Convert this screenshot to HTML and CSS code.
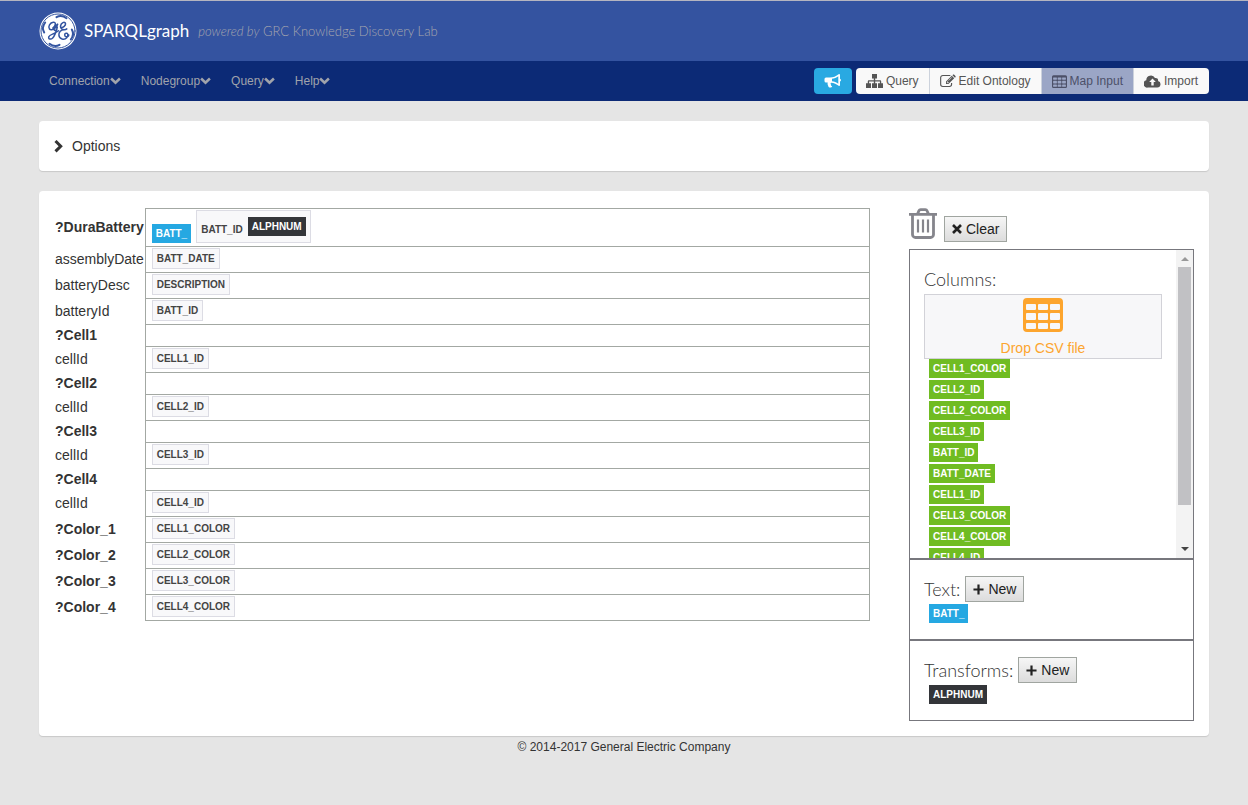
FILE: index.html
```html
<!DOCTYPE html>
<html lang="en">
<head>
<meta charset="utf-8">
<title>SPARQLgraph</title>
<link rel="stylesheet" href="styles.css">
</head>
<body>
<svg class="sprite" aria-hidden="true">
  <symbol id="chev-down" viewBox="0 0 12 8"><path d="M1.200 1.300 6 5.800l4.800-4.500" fill="none" stroke="currentColor" stroke-width="2.800"/></symbol>
  <symbol id="grid" viewBox="0 0 40 34"><path fill="currentColor" fill-rule="evenodd" d="M4 0h32a4 4 0 0 1 4 4v26a4 4 0 0 1-4 4H4a4 4 0 0 1-4-4V4a4 4 0 0 1 4-4zM4 6h8a1 1 0 0 1 1 1v4a1 1 0 0 1-1 1H4a1 1 0 0 1-1-1V7a1 1 0 0 1 1-1zM16 6h8a1 1 0 0 1 1 1v4a1 1 0 0 1-1 1h-8a1 1 0 0 1-1-1V7a1 1 0 0 1 1-1zM28 6h8a1 1 0 0 1 1 1v4a1 1 0 0 1-1 1h-8a1 1 0 0 1-1-1V7a1 1 0 0 1 1-1zM4 15h8a1 1 0 0 1 1 1v5a1 1 0 0 1-1 1H4a1 1 0 0 1-1-1v-5a1 1 0 0 1 1-1zM16 15h8a1 1 0 0 1 1 1v5a1 1 0 0 1-1 1h-8a1 1 0 0 1-1-1v-5a1 1 0 0 1 1-1zM28 15h8a1 1 0 0 1 1 1v5a1 1 0 0 1-1 1h-8a1 1 0 0 1-1-1v-5a1 1 0 0 1 1-1zM4 25h8a1 1 0 0 1 1 1v4a1 1 0 0 1-1 1H4a1 1 0 0 1-1-1v-4a1 1 0 0 1 1-1zM16 25h8a1 1 0 0 1 1 1v4a1 1 0 0 1-1 1h-8a1 1 0 0 1-1-1v-4a1 1 0 0 1 1-1zM28 25h8a1 1 0 0 1 1 1v4a1 1 0 0 1-1 1h-8a1 1 0 0 1-1-1v-4a1 1 0 0 1 1-1z"/></symbol>
  <symbol id="plus" viewBox="0 0 12 12"><path d="M6 .5v11M.5 6h11" stroke="currentColor" stroke-width="2.400"/></symbol>
</svg>

<header class="masthead">
  <div class="container brand">
    <svg class="logo" viewBox="0 0 38 38" aria-label="GE">
      <circle cx="19" cy="19" r="18.500" fill="#fff"/>
      <g fill="none" stroke="#3354a0" stroke-linecap="round">
        <circle cx="19" cy="19" r="17" stroke-width="1"/>
        <path stroke-width="2" d="M17.500 5.200c3-1.800 7-1.300 10 1M32.800 17.500c1.800 3 1.300 7-1 10M20.500 32.800c-3 1.800-7 1.300-10-1M5.200 20.500c-1.800-3-1.300-7 1-10"/>
        <path stroke-width="1.500" d="M10.500 17c-1.800-2.500.5-6.500 3.800-6.800 3-.2 2.700 3.300-.5 5.800M10.500 17c1 1.500 4.500 1 7-2.500.5-.8 1-1.800 1.300-2.800-.8 1.300-2.300 2.300-3.300 4-1.500 2.500 1 3.800 2.500 1.300M18.300 15c-.8 3.500-2.300 8.500-4.600 11-1.700 1.800-4.700 1.300-3.900-1.200.9-2.600 6.200-2.800 9.700-6"/>
        <path stroke-width="1.500" d="M22 15.300c2 .5 5-1.800 4.500-3.900-.6-2.100-4.600-.9-5 2.800-.2 2.200 1.300 3.600 4 3.500 1 0 1.700-.3 2.300-.8M25.500 17.700c-3.700-.1-5.800 2.600-5.600 5.300.3 4.300 5.500 5.400 7.800 2.800 2-2.300 1.200-5-.7-4.600-1.800.4-1.800 3.200.3 3.600 1.300.2 2.300-.6 2.500-1.900"/>
      </g>
    </svg>
    <span class="title">SPARQLgraph</span>
    <span class="tagline"><em>powered by</em> GRC Knowledge Discovery Lab</span>
  </div>
</header>

<nav class="navbar">
  <div class="container nav-row">
    <div class="menus">
      <button type="button" class="menu">Connection<svg class="chev"><use href="#chev-down"/></svg></button>
      <button type="button" class="menu">Nodegroup<svg class="chev"><use href="#chev-down"/></svg></button>
      <button type="button" class="menu">Query<svg class="chev"><use href="#chev-down"/></svg></button>
      <button type="button" class="menu">Help<svg class="chev"><use href="#chev-down"/></svg></button>
    </div>
    <button type="button" class="feedback" aria-label="Announcements">
      <svg width="17" height="15" viewBox="0 0 17 15"><path fill="currentColor" fill-rule="evenodd" d="M15 0c.6 0 1 .5 1 1v3.800a1.500 1.500 0 0 1 0 2.800V11c0 .6-.4 1-1 1-2.500-2-5-3-7.700-3.300-.8.300-1 1.300-.3 1.800-.4.800.3 1.400 1.200 2-.5 1.200-2.600 1.300-3.600.4C4 11.200 3.200 10.300 3.700 8.500H2A1.500 1.500 0 0 1 .5 7V5A1.500 1.500 0 0 1 2 3.500h4C9 3.500 12 2.500 15 0zm-.7 2.200C12.300 3.600 10.300 4.400 8 4.700v2.600c2.300.3 4.300 1.100 6.300 2.500z"/></svg>
    </button>
    <div class="tabs">
      <button type="button" class="tab">
        <svg width="17" height="14" viewBox="0 0 17 14"><path fill="currentColor" d="M6 0h5v4.500H9.200v1.800H14c.7 0 1.200.5 1.200 1.200v1.700H17V14h-5V9.200h1.900V7.600H9.200v1.600H11V14H6V9.200h1.800V7.600H3.100v1.600H5V14H0V9.200h1.800V7.500c0-.7.500-1.200 1.200-1.200h4.800V4.500H6z"/></svg>
        Query</button>
      <button type="button" class="tab">
        <svg width="16" height="14" viewBox="0 0 17 14"><path d="M11 1.200H3A2.300 2.300 0 0 0 .7 3.500v7A2.300 2.300 0 0 0 3 12.800h7a2.300 2.300 0 0 0 2.300-2.300V9" fill="none" stroke="currentColor" stroke-width="1.200"/><path fill="currentColor" fill-rule="evenodd" d="m12.500 1.500 2.600 2.600L9 10.200H6.400V7.600zM13.200.8l.5-.5c.4-.4 1-.4 1.400 0l1.300 1.300c.4.400.4 1 0 1.400l-.5.500zM8 7.300l-.7.700v.7h.7v.7h.5l.8-.8zM12.200 3 8.800 6.400l.4.300 3.400-3.400z"/></svg>
        Edit Ontology</button>
      <button type="button" class="tab active" aria-pressed="true">
        <svg width="15" height="13"><use href="#grid"/></svg>
        Map Input</button>
      <button type="button" class="tab">
        <svg width="17" height="13" viewBox="0 0 17 13"><path fill="currentColor" fill-rule="evenodd" d="M4 12.500A3.700 3.700 0 0 1 2.300 5.300 4.600 4.600 0 0 1 11 3a2.400 2.400 0 0 1 3 3 3.300 3.300 0 0 1-.7 6.500zM8.500 3.500 5.200 7h2.100v3.500h2.400V7h2.100z"/></svg>
        Import</button>
    </div>
  </div>
</nav>

<main class="container page">
  <section class="panel options">
    <button type="button" class="options-toggle">
      <svg width="9" height="13" viewBox="0 0 9 13"><path d="M1.500 1 6.700 6.200l-5.200 5.200" fill="none" stroke="currentColor" stroke-width="3"/></svg>
      Options</button>
  </section>

  <section class="panel workspace">
    <table class="mapping">
      <tbody>
        <tr><th scope="row" class="node">?DuraBattery</th><td><div class="items"><span class="tag text">BATT_</span><span class="chip combo">BATT_ID<span class="tag transform">ALPHNUM</span></span></div></td></tr>
        <tr><th scope="row">assemblyDate</th><td><div class="items"><span class="chip">BATT_DATE</span></div></td></tr>
        <tr><th scope="row">batteryDesc</th><td><div class="items"><span class="chip">DESCRIPTION</span></div></td></tr>
        <tr><th scope="row">batteryId</th><td><div class="items"><span class="chip">BATT_ID</span></div></td></tr>
        <tr><th scope="row" class="node">?Cell1</th><td></td></tr>
        <tr><th scope="row">cellId</th><td><div class="items"><span class="chip">CELL1_ID</span></div></td></tr>
        <tr><th scope="row" class="node">?Cell2</th><td></td></tr>
        <tr><th scope="row">cellId</th><td><div class="items"><span class="chip">CELL2_ID</span></div></td></tr>
        <tr><th scope="row" class="node">?Cell3</th><td></td></tr>
        <tr><th scope="row">cellId</th><td><div class="items"><span class="chip">CELL3_ID</span></div></td></tr>
        <tr><th scope="row" class="node">?Cell4</th><td></td></tr>
        <tr><th scope="row">cellId</th><td><div class="items"><span class="chip">CELL4_ID</span></div></td></tr>
        <tr><th scope="row" class="node">?Color_1</th><td><div class="items"><span class="chip">CELL1_COLOR</span></div></td></tr>
        <tr><th scope="row" class="node">?Color_2</th><td><div class="items"><span class="chip">CELL2_COLOR</span></div></td></tr>
        <tr><th scope="row" class="node">?Color_3</th><td><div class="items"><span class="chip">CELL3_COLOR</span></div></td></tr>
        <tr><th scope="row" class="node">?Color_4</th><td><div class="items"><span class="chip">CELL4_COLOR</span></div></td></tr>
      </tbody>
    </table>

    <aside class="sources">
      <div class="tools">
        <svg class="trash" width="28" height="32" viewBox="0 0 28 32"><g fill="none" stroke="currentColor"><path stroke-width="2.800" d="M3.500 6.500v20a3 3 0 0 0 3 3h15a3 3 0 0 0 3-3v-20"/><path stroke-width="2.800" d="M0 6.400h28M8.500 6 10 2.700c.3-.7.900-1 1.600-1h4.800c.7 0 1.300.3 1.600 1L19.500 6"/><path stroke-width="2.200" d="M9 11.500v13M14 11.500v13M19 11.500v13"/></g></svg>
        <button type="button" class="btn"><svg width="10" height="10" viewBox="0 0 10 10"><path d="m1 1 8 8M9 1 1 9" stroke="currentColor" stroke-width="2.600"/></svg>Clear</button>
      </div>
      <div class="box columns">
        <div class="columns-view" tabindex="0">
          <h2 class="heading">Columns:</h2>
          <div class="drop"><svg width="40" height="34"><use href="#grid"/></svg><span>Drop CSV file</span></div>
          <ul class="tags">
            <li class="tag column">CELL1_COLOR</li>
            <li class="tag column">CELL2_ID</li>
            <li class="tag column">CELL2_COLOR</li>
            <li class="tag column">CELL3_ID</li>
            <li class="tag column">BATT_ID</li>
            <li class="tag column">BATT_DATE</li>
            <li class="tag column">CELL1_ID</li>
            <li class="tag column">CELL3_COLOR</li>
            <li class="tag column">CELL4_COLOR</li>
            <li class="tag column">CELL4_ID</li>
          </ul>
        </div>
        <div class="scrollbar" aria-hidden="true">
          <svg width="8" height="17" viewBox="0 0 8 17"><path d="M0 11l4-4 4 4z" fill="#999"/></svg>
          <div class="track"><div class="thumb"></div></div>
          <svg width="8" height="17" viewBox="0 0 8 17"><path d="M0 6l4 4 4-4z" fill="#444"/></svg>
        </div>
      </div>
      <div class="box">
        <h2 class="heading">Text: <button type="button" class="btn"><svg width="11" height="11"><use href="#plus"/></svg>New</button></h2>
        <ul class="tags"><li class="tag text">BATT_</li></ul>
      </div>
      <div class="box">
        <h2 class="heading">Transforms: <button type="button" class="btn"><svg width="11" height="11"><use href="#plus"/></svg>New</button></h2>
        <ul class="tags"><li class="tag transform">ALPHNUM</li></ul>
      </div>
    </aside>
  </section>
</main>
<footer class="footer">© 2014-2017 General Electric Company</footer>
</body>
</html>
```
FILE: styles.css
```css
* { box-sizing: border-box; }

body {
  margin: 0;
  background: #e5e5e5;
  color: #333;
  font: 14px/20px "Liberation Sans", Arial, sans-serif;
}

button {
  margin: 0;
  border: 0;
  padding: 0;
  background: none;
  color: inherit;
  font: inherit;
}

.sprite { display: none; }

.container {
  width: calc(100% - 40px);
  max-width: 1170px;
  margin: 0 auto;
}

.masthead {
  border-top: 1px solid #b5b5c0;
  background: #3453a0;
}

.brand {
  display: flex;
  align-items: center;
  height: 60px;
  font-family: Lato, sans-serif;
}

.logo { width: 38px; height: 38px; }

.title {
  margin-left: 7px;
  color: #fff;
  font-size: 17px;
}

.tagline {
  margin-left: 9px;
  color: #a6a6ae;
  font-size: 13px;
  font-weight: 300;
}

.navbar { background: #0c2a76; }

.nav-row {
  display: flex;
  align-items: center;
  gap: 4px;
  height: 40px;
  font-size: 12px;
}

.menus {
  display: flex;
  flex: 1;
  gap: 20px;
  padding-left: 10px;
}

.menu {
  display: flex;
  align-items: center;
  color: #a0a3ab;
}

.chev { width: 11px; height: 8px; }

.feedback {
  display: flex;
  align-items: center;
  justify-content: center;
  width: 38px;
  height: 26px;
  border-radius: 4px;
  background: #29a9e2;
  color: #fff;
}

.tabs {
  display: flex;
  overflow: hidden;
  border-radius: 4px;
  background: #f9f9f9;
}

.tab {
  display: flex;
  align-items: center;
  gap: 3px;
  height: 26px;
  padding: 0 10px;
  color: #555;
}

.tab + .tab { border-left: 1px solid #ccd2dc; }

.tab.active {
  background: #9ba6c6;
  color: #4c5068;
}

.tab.active + .tab { padding-right: 11px; }

.page {
  display: grid;
  gap: 20px;
  padding-top: 20px;
}

.panel {
  border-radius: 4px;
  background: #fff;
  box-shadow: 0 1px 1px #c8c8c8;
}

.options { padding: 15px; }

.options-toggle {
  display: flex;
  align-items: center;
  gap: 9px;
}

.workspace {
  display: grid;
  grid-template-columns: 1fr 285px;
  align-items: start;
  gap: 39px;
  padding: 17px 15px 15px;
}

.mapping {
  width: 100%;
  border-collapse: collapse;
}

.mapping th {
  width: 91px;
  padding: 0 1px 2px;
  font-weight: normal;
  line-height: 20px;
  text-align: left;
}

.mapping .node { font-weight: bold; }

.mapping td {
  height: 22px;
  padding: 1px 6px 3px;
  border: 1px solid #a3a8a3;
}

.items {
  display: flex;
  align-items: flex-end;
  gap: 5px;
}

.chip {
  border: 1px solid #dcdce4;
  padding: 3px 4px;
  background: #f8f8fa;
  color: #444;
  font-size: 10px;
  font-weight: bold;
  line-height: 13px;
}

.combo {
  display: flex;
  align-items: flex-end;
  gap: 5px;
  padding: 6px 4px;
}

.tag {
  padding: 3px 4px;
  color: #fff;
  font-size: 10px;
  font-weight: bold;
  line-height: 13px;
}

.column { background: #70bc22; }
.text { background: #25a8e2; }
.transform { background: #333539; }

.tools {
  display: flex;
  align-items: flex-end;
  gap: 7px;
  padding-bottom: 7px;
}

.trash {
  height: 34px;
  padding-bottom: 2px;
  color: #85858c;
}

.btn {
  display: flex;
  align-items: center;
  gap: 4px;
  height: 26px;
  border: 1px solid #a0a5a0;
  padding: 0 7px;
  background: linear-gradient(#f6f6f6, #dcdcdc);
  color: #222;
  font: 14px/20px "Liberation Sans", Arial, sans-serif;
}

.box {
  border: 1px solid #77777d;
  padding: 14px;
}

.columns {
  display: flex;
  height: 310px;
  padding: 0;
}

.columns-view {
  flex: 1;
  padding: 14px;
  overflow: auto;
}

.scrollbar {
  display: flex;
  flex-direction: column;
  align-items: center;
  width: 17px;
  background: #f3f3f3;
}

.track {
  flex: 1;
  width: 13px;
}

.thumb {
  height: 87%;
  background: #c1c1c4;
}

.heading {
  display: flex;
  align-items: center;
  gap: 5px;
  height: 30px;
  margin: 0;
  font: 300 18px/30px Lato, sans-serif;
}

.drop {
  display: flex;
  flex-direction: column;
  align-items: center;
  gap: 6px;
  border: 1px solid #d2d2d8;
  padding-top: 3px;
  background: #f7f7f9;
  color: #fda52e;
}

.tags {
  display: flex;
  flex-direction: column;
  align-items: flex-start;
  gap: 2px;
  margin: 0;
  padding: 0 5px 2px;
  list-style: none;
}

.footer {
  padding-top: 1px;
  font-size: 12px;
  text-align: center;
}
```
